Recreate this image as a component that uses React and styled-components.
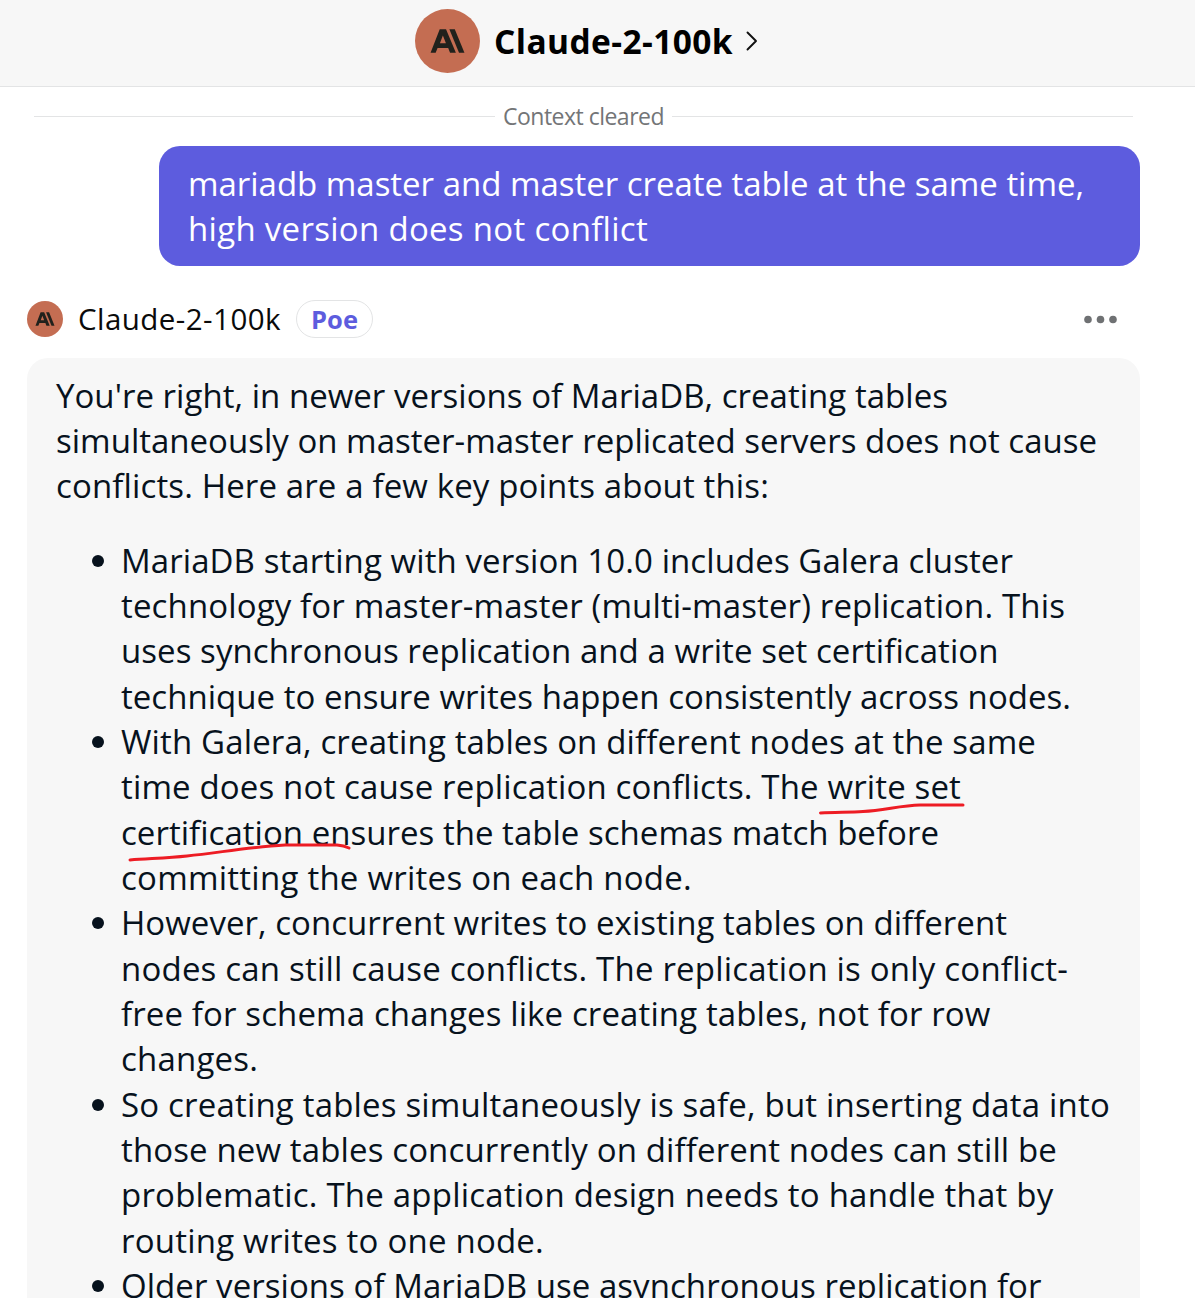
import React, { useLayoutEffect, useRef, useState } from "react";
import styled, { createGlobalStyle } from "styled-components";

const GlobalStyle = createGlobalStyle`
  *, *::before, *::after { box-sizing: border-box; }
  body {
    margin: 0;
    background: #fff;
    font-family: "Open Sans", "Noto Sans", sans-serif;
    overflow: hidden;
  }
`;

const Page = styled.main`
  height: 1298px;
  overflow: hidden;
  display: flex;
  flex-direction: column;
  background: #fff;
`;

const Header = styled.header`
  flex: none;
  height: 87px;
  padding: 0 0 4px 415px;
  display: flex;
  align-items: center;
  background: #f7f7f7;
  border-bottom: 1px solid #e3e4e5;
`;

const AvatarCircle = styled.span`
  flex: none;
  width: ${(p) => p.$width}px;
  height: ${(p) => p.$height}px;
  border-radius: 50%;
  background: #c46d52;
  display: flex;
  svg { width: 100%; height: 100%; }
`;

const Title = styled.h1`
  margin: 0 0 0 14px;
  font-size: 33.5px;
  line-height: 44px;
  font-weight: 700;
  color: #000;
`;

const Chevron = styled.svg`
  width: 12px;
  height: 20px;
  margin-left: 13px;
`;

const Chat = styled.section`
  flex: none;
  width: 1140px;
  padding-left: 27px;
  display: flex;
  flex-direction: column;
`;

const Divider = styled.div`
  height: 59px;
  padding: 0 7px;
  display: flex;
  align-items: center;
  gap: 8px;
  font-size: 23px;
  line-height: 30px;
  color: #737577;
  &::before, &::after {
    content: "";
    flex: 1;
    height: 1px;
    background: #e3e4e5;
  }
`;

const DividerLabel = styled.span`
  padding-bottom: 2px;
`;

const UserBubble = styled.div`
  align-self: flex-end;
  width: 981px;
  height: 120px;
  padding: 15px 29px;
  border-radius: 21px;
  background: #5d5cde;
  color: #fff;
  font-size: 33px;
  font-weight: 500;
  line-height: 45.33px;
`;

const BotRow = styled.div`
  height: 38px;
  margin: 34px 0 20px;
  padding-right: 22px;
  display: flex;
  align-items: center;
`;

const BotName = styled.span`
  margin-left: 15px;
  font-size: 29.5px;
  line-height: 38px;
  color: #0a0a0a;
`;

const Badge = styled.span`
  width: 77px;
  height: 38px;
  margin-left: 15px;
  border: 1px solid #e3e4e5;
  border-radius: 19px;
  display: flex;
  align-items: center;
  justify-content: center;
  color: #5d5cde;
  font-size: 25.5px;
  line-height: 34px;
  font-weight: 700;
`;

const Dots = styled.svg`
  width: 34px;
  height: 10px;
  margin-left: auto;
`;

const BotBubble = styled.article`
  position: relative;
  height: 980px;
  padding: 14.6px 29px;
  border-radius: 21px;
  background: #f7f7f7;
  color: #07121d;
  font-size: 33px;
  line-height: 45.33px;
`;

const Paragraph = styled.p`
  margin: 0 0 29px;
`;

const List = styled.ul`
  margin: 0;
  padding: 0;
  list-style: none;
`;

const Item = styled.li`
  display: flex;
  padding-left: 35.5px;
`;

const Bullet = styled.span`
  flex: none;
  width: 12px;
  height: 12px;
  margin: 17px 17.5px 0 0;
  border-radius: 50%;
  background: #07121d;
`;

const ItemText = styled.div`
  flex: 1;
`;

const LineBox = styled.span`
  display: ${(p) => (p.$inline ? "inline-block" : "block")};
  white-space: nowrap;
`;

const PenStrokes = styled.svg`
  position: absolute;
  left: 93px;
  top: 432px;
  width: 860px;
  height: 80px;
`;

/* Tracks a single line of text out to the given width. */
function Line({ width, inline, children }) {
  const ref = useRef(null);
  const [tracking, setTracking] = useState(0);
  useLayoutEffect(() => {
    const natural = ref.current.getBoundingClientRect().width;
    setTracking((width - natural) / children.length);
  }, [width, children]);
  return (
    <LineBox $inline={inline}>
      <span ref={ref} style={{ letterSpacing: `${tracking}px` }}>{children}</span>
    </LineBox>
  );
}

function Avatar({ width, height }) {
  return (
    <AvatarCircle $width={width} $height={height}>
      <svg viewBox="0 0 65 65" fill="#21211c">
        <path
          fillRule="evenodd"
          d="M24.600 20.500h6.400L41 44.500h-5.900l-1.900-4.900H22.400l-1.900 4.900H15.300ZM27.800 26.800l-3 8h6.100Z"
        />
        <path d="M34.400 20.500h5.500L49.700 44.500h-5.500Z" />
      </svg>
    </AvatarCircle>
  );
}

const intro = [
  ["You're right, in newer versions of MariaDB, creating tables", 892],
  ["simultaneously on master-master replicated servers does not cause", 1041],
  ["conflicts. Here are a few key points about this:", 713],
];

const points = [
  [
    ["MariaDB starting with version 10.0 includes Galera cluster", 892],
    ["technology for master-master (multi-master) replication. This", 944],
    ["uses synchronous replication and a write set certification", 877.5],
    ["technique to ensure writes happen consistently across nodes.", 950],
  ],
  [
    ["With Galera, creating tables on different nodes at the same", 915],
    ["time does not cause replication conflicts. The write set", 840],
    ["certification ensures the table schemas match before", 818],
    ["committing the writes on each node.", 571],
  ],
  [
    ["However, concurrent writes to existing tables on different", 886],
    ["nodes can still cause conflicts. The replication is only conflict-", 947],
    ["free for schema changes like creating tables, not for row", 869.5],
    ["changes.", 137],
  ],
  [
    ["So creating tables simultaneously is safe, but inserting data into", 989],
    ["those new tables concurrently on different nodes can still be", 936],
    ["problematic. The application design needs to handle that by", 932.5],
    ["routing writes to one node.", 423],
  ],
  [["Older versions of MariaDB use asynchronous replication for", 920.5]],
];

const renderLines = (lines) =>
  lines.map(([text, width]) => (
    <Line key={text} width={width}>{text}</Line>
  ));

export default function App() {
  return (
    <Page>
      <GlobalStyle />
      <Header>
        <Avatar width={65} height={64} />
        <Title><Line inline width={239}>Claude-2-100k</Line></Title>
        <Chevron viewBox="0 0 12 20" fill="none" stroke="#111" strokeWidth="1.9">
          <path d="M1.5 1.5 10 10l-8.500 8.500" strokeLinecap="round" strokeLinejoin="round" />
        </Chevron>
      </Header>
      <Chat>
        <Divider>
          <DividerLabel><Line inline width={161}>Context cleared</Line></DividerLabel>
        </Divider>
        <UserBubble>
          <Line width={896}>mariadb master and master create table at the same time,</Line>
          <Line width={460}>high version does not conflict</Line>
        </UserBubble>
        <BotRow>
          <Avatar width={36} height={36} />
          <BotName><Line inline width={203}>Claude-2-100k</Line></BotName>
          <Badge><Line inline width={47}>Poe</Line></Badge>
          <Dots viewBox="0 0 34 10" fill="#6f7173">
            <circle cx="4" cy="5.500" r="3.800" />
            <circle cx="16.500" cy="5.500" r="3.800" />
            <circle cx="29" cy="5.500" r="3.800" />
          </Dots>
        </BotRow>
        <BotBubble>
          <Paragraph>{renderLines(intro)}</Paragraph>
          <List>
            {points.map((lines) => (
              <Item key={lines[0][0]}>
                <Bullet />
                <ItemText>{renderLines(lines)}</ItemText>
              </Item>
            ))}
          </List>
          <PenStrokes viewBox="120 790 860 80" fill="none" stroke="#ed1c24" strokeWidth="3" strokeLinecap="round">
            <path d="M820.500 813C835 812 850 812.500 863 811.500C885 810 901 805.500 920 805H963" />
            <path d="M130 860C150 858.500 168 858 187 856C220 852.500 250 847 285 845H337Q344 845.500 349 848" />
          </PenStrokes>
        </BotBubble>
      </Chat>
    </Page>
  );
}
